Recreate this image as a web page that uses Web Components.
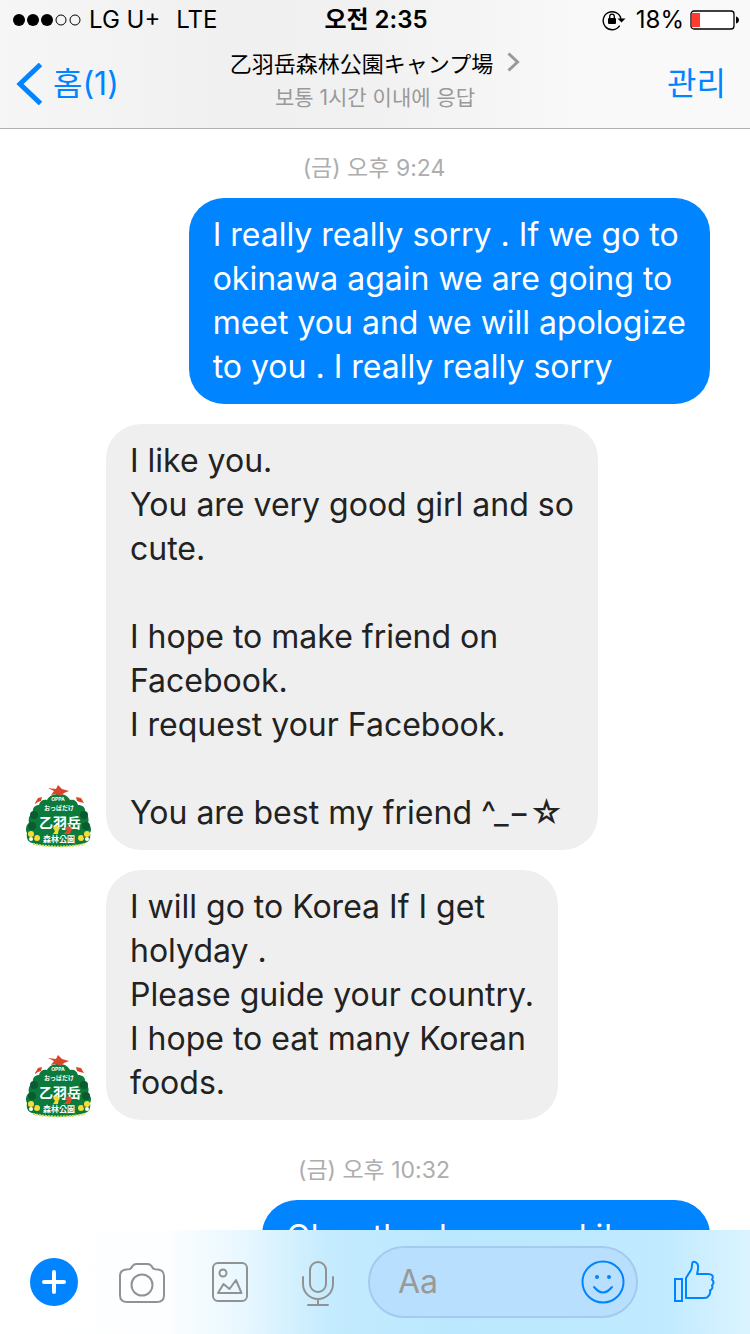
<!DOCTYPE html>
<html lang="ko">
<head>
<meta charset="utf-8">
<meta name="viewport" content="width=device-width, initial-scale=1">
<title>Messenger</title>
<style>
  body {
    margin: 0;
    background: #fff;
    font-family: Inter, "Noto Sans CJK KR", sans-serif;
  }
</style>
</head>
<body>
<chat-app>
  <status-bar slot="top" carrier="LG U+" network="LTE" time="오전 2:35" battery="18"></status-bar>
  <chat-header slot="top" back="홈(1)" action="관리">
    <span slot="title" lang="ja">乙羽岳森林公園キャンプ場</span>
    <span slot="subtitle">보통 1시간 이내에 응답</span>
  </chat-header>

  <time-stamp>(금) 오후 9:24</time-stamp>
  <chat-message mine>I really really sorry . If we go to<br>okinawa again we are going to<br>meet you and we will apologize<br>to you . I really really sorry</chat-message>
  <chat-message>I like you.<br>You are very good girl and so<br>cute.<br><br>I hope to make friend on<br>Facebook.<br>I request your Facebook.<br><br>You are best my friend ^_−☆</chat-message>
  <chat-message>I will go to Korea If I get<br>holyday .<br>Please guide your country.<br>I hope to eat many Korean<br>foods.</chat-message>
  <time-stamp>(금) 오후 10:32</time-stamp>
  <chat-message mine>Okay thank you and i'm so</chat-message>

  <message-composer slot="bottom"></message-composer>
</chat-app>

<script>
class ChatApp extends HTMLElement {
  constructor() {
    super();
    this.attachShadow({ mode: 'open' });
    this.shadowRoot.innerHTML = `
      <style>
        :host {
          display: flex;
          flex-direction: column;
          height: 100vh;
          overflow: hidden;
        }
        header {
          background: linear-gradient(90deg, #f5f6f5 0%, #f0f0f0 30%, #f1f1f1 50%, #f9f9f9 78%);
          border-bottom: 1px solid #b2b2b2;
        }
        main {
          flex: 1;
          min-height: 0;
          overflow: hidden;
          display: flex;
          flex-direction: column;
          gap: 20px;
          padding: 9px 40px 0 26px;
        }
      </style>
      <header><slot name="top"></slot></header>
      <main><slot></slot></main>
      <slot name="bottom"></slot>
    `;
  }
}

class StatusBar extends HTMLElement {
  constructor() {
    super();
    this.attachShadow({ mode: 'open' });
  }

  connectedCallback() {
    const level = Number(this.getAttribute('battery'));
    this.shadowRoot.innerHTML = `
      <style>
        :host {
          display: grid;
          grid-template-columns: 1fr auto 1fr;
          align-items: center;
          height: 40px;
          padding: 0 10px 0 12px;
          font-size: 24px;
          line-height: 40px;
          color: #000;
        }
        svg { display: block; }
        .left, .right {
          display: flex;
          align-items: center;
        }
        .left { gap: 8px; }
        .network { margin-left: 8px; }
        .time { font-weight: 600; }
        .right { justify-content: flex-end; gap: 6px; }
        .lock { margin-right: 4px; }
      </style>
      <div class="left">
        <svg width="69" height="14" viewBox="0 0 69 14">
          <circle cx="7" cy="7" r="6"/><circle cx="21" cy="7" r="6"/><circle cx="35" cy="7" r="6"/>
          <g fill="none" stroke="#000"><circle cx="49" cy="7" r="5"/><circle cx="63" cy="7" r="5"/></g>
        </svg>
        <span>${this.getAttribute('carrier')}</span>
        <span class="network">${this.getAttribute('network')}</span>
      </div>
      <span class="time">${this.getAttribute('time')}</span>
      <div class="right">
        <svg class="lock" width="24" height="22" viewBox="0 0 24 22">
          <path d="M17.7 16.7A9 9 0 1 1 19 10" fill="none" stroke="#000" stroke-width="1.4"/>
          <path d="M15.5 9.5h8l-4 4z"/>
          <rect x="6" y="9" width="8" height="6" rx="1"/>
          <path d="M7.700 9V7.500a2.300 2.300 0 0 1 4.600 0V9" fill="none" stroke="#000" stroke-width="1.300"/>
        </svg>
        <span>${level}%</span>
        <svg width="50" height="20" viewBox="0 0 50 20">
          <rect x="1" y="1" width="43" height="18" rx="3" fill="#fff" stroke="#000" stroke-width="1.3"/>
          <rect x="2" y="3" width="${Math.round(41 * level / 100) + 1}" height="14" fill="#ff3b30"/>
          <path d="M46 6.500c4 1 4 6 0 7z"/>
        </svg>
      </div>
    `;
  }
}

class ChatHeader extends HTMLElement {
  constructor() {
    super();
    this.attachShadow({ mode: 'open' });
  }

  connectedCallback() {
    this.shadowRoot.innerHTML = `
      <style>
        :host {
          display: grid;
          grid-template-columns: 1fr auto 1fr;
          align-items: center;
          height: 88px;
          padding: 0 24px 0 16px;
        }
        a, button {
          font: 400 32px/40px Inter, "Noto Sans CJK KR", sans-serif;
          color: #0084ff;
          text-decoration: none;
        }
        button {
          justify-self: end;
          padding: 0;
          border: 0;
          background: none;
        }
        .back {
          display: flex;
          align-items: center;
          gap: 10px;
        }
        svg { display: block; }
        .center {
          padding: 0 0 8px 8px;
          text-align: center;
        }
        .title {
          display: flex;
          align-items: center;
          gap: 14px;
          margin: 0;
          font: 400 22px/36px "Noto Sans CJK JP", sans-serif;
          color: #000;
        }
        p {
          margin: 0;
          font: 400 21px/36px Inter, "Noto Sans CJK KR", sans-serif;
          color: #999;
        }
      </style>
      <a class="back" href="#">
        <svg width="27" height="42" viewBox="0 0 27 42">
          <path d="M24.500 1.500 4 21l20.500 19.500" fill="none" stroke="#0084ff" stroke-width="5"/>
        </svg>
        <span>${this.getAttribute('back')}</span>
      </a>
      <div class="center">
        <h1 class="title">
          <slot name="title"></slot>
          <svg width="13" height="20" viewBox="0 0 13 20">
            <path d="m1.500 1.500 9 8.500-9 8.500" fill="none" stroke="#999" stroke-width="3"/>
          </svg>
        </h1>
        <p><slot name="subtitle"></slot></p>
      </div>
      <button type="button">${this.getAttribute('action')}</button>
    `;
  }
}

class TimeStamp extends HTMLElement {
  constructor() {
    super();
    this.attachShadow({ mode: 'open' });
    this.shadowRoot.innerHTML = `
      <style>
        :host {
          display: block;
          flex: none;
          margin: 20px 0 0 12px;
          text-align: center;
          font-size: 23px;
          line-height: 20px;
          color: #adadad;
        }
      </style>
      <slot></slot>
    `;
  }
}

class CampAvatar extends HTMLElement {
  constructor() {
    super();
    this.attachShadow({ mode: 'open' });
    this.shadowRoot.innerHTML = `
      <style>
        :host { display: block; width: 66px; height: 66px; }
        svg { display: block; }
        text {
          font-family: "Noto Sans CJK JP", sans-serif;
          font-weight: 700;
          fill: #fff;
          text-anchor: middle;
        }
        .latin { font-family: Inter, sans-serif; }
      </style>
      <svg width="66" height="66" viewBox="0 0 66 66">
        <path fill="#0b7a3b" d="M33 10c5 0 9 2 11 6 4-1 7 1 8 5 5 0 8 3 7 8 4 3 4 7 3 10 3 3 4 7 2 10 1 5-1 9-5 10-16 5-37 5-53 0-4-1-6-5-5-10-2-3-1-8 2-10-1-4 0-8 4-10-1-5 2-8 6-8 1-4 4-6 8-5 2-4 6-6 12-6z"/>
        <g fill="#0a5c30">
          <circle cx="8" cy="31" r="4"/><circle cx="58" cy="31" r="4"/>
          <circle cx="6" cy="42" r="4"/><circle cx="60" cy="42" r="4"/>
        </g>
        <path fill="#d8452b" d="m22 4 8 1 2-4 4 4 7 2-5 2-3 3-5-2-5 1 3-4z"/>
        <path fill="#d8452b" d="m9 19 3-5 4-1-1 4-3 1-3 2zM50 13l5 1 3 5-4-1-3-1z"/>
        <text class="latin" x="32" y="17" font-size="5">OPPA</text>
        <text x="33" y="26" font-size="6">おっぱだけ</text>
        <text x="34" y="44" font-size="14">乙羽岳</text>
        <path fill="#f5dc2c" d="M27 44q4-5 6 0l-1 6h-5l2-3z"/>
        <path fill="#df4b2a" d="M39 44q4-4 7 1l-2 5h-7l4-3z"/>
        <g fill="#f4df38">
          <circle cx="5" cy="50" r="3"/><circle cx="11" cy="54" r="3"/>
          <circle cx="55" cy="54" r="3"/><circle cx="61" cy="50" r="3"/>
        </g>
        <g fill="#fff">
          <circle cx="5" cy="55" r="2"/><circle cx="61" cy="55" r="2"/>
        </g>
        <g fill="#d8452b">
          <circle cx="8" cy="53" r="1"/><circle cx="58" cy="53" r="1"/>
        </g>
        <text x="33" y="58" font-size="8">森林公園</text>
        <path d="M7 60q26 5 52 0" fill="none" stroke="#d3df6a" stroke-width="2" stroke-dasharray="2 1"/>
      </svg>
    `;
  }
}

class ChatMessage extends HTMLElement {
  constructor() {
    super();
    this.attachShadow({ mode: 'open' });
  }

  connectedCallback() {
    const mine = this.hasAttribute('mine');
    this.shadowRoot.innerHTML = `
      <style>
        :host {
          display: flex;
          flex: none;
          align-items: flex-end;
          gap: 14px;
        }
        :host([mine]) { justify-content: flex-end; }
        .bubble {
          padding: 15px 24px;
          border-radius: 35px;
          background: #efefef;
          color: #222;
          font-size: 32px;
          line-height: 44px;
        }
        :host([mine]) .bubble {
          background: #0084ff;
          color: #fff;
        }
      </style>
      ${mine ? '' : '<camp-avatar></camp-avatar>'}
      <div class="bubble"><slot></slot></div>
    `;
  }
}

class MessageComposer extends HTMLElement {
  constructor() {
    super();
    this.attachShadow({ mode: 'open' });
    this.shadowRoot.innerHTML = `
      <style>
        :host {
          display: flex;
          align-items: center;
          gap: 26px;
          height: 104px;
          padding: 0 26px 0 30px;
          background: linear-gradient(90deg, #fff 0%, #fdfeff 22%, #e9f8ff 32%, #c4ebfe 44%, #bbe8fe 60%, #bfeaff 88%, #dcf4ff 100%);
        }
        button {
          padding: 0;
          border: 0;
          background: none;
        }
        svg {
          display: block;
          fill: none;
          stroke: #929292;
          stroke-width: 2;
        }
        .tools {
          display: flex;
          gap: 40px;
        }
        .blue { stroke: #0084ff; }
        .field {
          flex: 1;
          min-width: 0;
          display: flex;
          align-items: center;
          height: 72px;
          box-sizing: border-box;
          padding: 0 10px 0 28px;
          border: 2px solid #a5c9ef;
          border-radius: 36px;
          background: #b8e0fe;
        }
        input {
          flex: 1;
          min-width: 0;
          padding: 0;
          border: 0;
          outline: 0;
          background: none;
          font: 32px/44px Inter, sans-serif;
          color: #222;
        }
        input::placeholder { color: #999; opacity: 1; }
        .like { width: 60px; }
        .like svg { margin: 0 auto; }
      </style>
      <div class="tools">
        <button type="button" aria-label="More">
          <svg width="48" height="48" viewBox="0 0 48 48">
            <circle cx="24" cy="24" r="24" fill="#0084ff" stroke="none"/>
            <path d="M24 14v20M14 24h20" stroke="#fff" stroke-width="4" stroke-linecap="round"/>
          </svg>
        </button>
        <button type="button" aria-label="Camera">
          <svg width="48" height="48" viewBox="0 0 48 48">
            <path d="M8 11.500c4 0 5-.5 6.500-3.500 1-1.500 2-2 4-2h11c2 0 3 .5 4 2 1.500 3 2.500 3.500 6.500 3.500 4 .5 6 3 6 6.500v19c0 5-3 7-7 7H9c-4 0-7-2-7-7V18c0-3.500 2-6 6-6.500z"/>
            <circle cx="24" cy="27" r="10.500"/>
          </svg>
        </button>
        <button type="button" aria-label="Photos">
          <svg width="48" height="48" viewBox="0 0 48 48">
            <rect x="7" y="5" width="34" height="38" rx="5"/>
            <circle cx="17" cy="15" r="3.500"/>
            <path d="m12 35 5.500-9 6 5L30 22l5.500 13z" stroke-linejoin="round"/>
          </svg>
        </button>
        <button type="button" aria-label="Voice">
          <svg width="48" height="48" viewBox="0 0 48 48" stroke-linecap="round">
            <rect x="16" y="4" width="16" height="30" rx="8"/>
            <path d="M9 19v7a15 15 0 0 0 30 0v-7M24 41v6M14 47h20"/>
          </svg>
        </button>
      </div>
      <div class="field">
        <input type="text" placeholder="Aa" aria-label="Message">
        <button type="button" aria-label="Emoji">
          <svg class="blue" width="46" height="46" viewBox="0 0 46 46">
            <circle cx="23" cy="23" r="20.500"/>
            <g fill="#0084ff" stroke="none"><circle cx="17" cy="18" r="2"/><circle cx="29" cy="18" r="2"/></g>
            <path d="M14 28q9 11 18 0" stroke-linecap="round"/>
          </svg>
        </button>
      </div>
      <button class="like" type="button" aria-label="Like">
        <svg class="blue" width="48" height="48" viewBox="0 0 48 48">
          <path d="M5 21h7v22H5z"/>
          <path d="M16 40V20l5-8c1.500-3 .5-5 1.500-7.500 1-1.500 4-.5 5 1.500 1.500 3 .5 6-.5 10h11c4 0 6 2 4 5.500 2 2 2 4 0 6 1 2 0 4-2 5 1 3-1 5-2 6-.5 1.500-2 1.500-4 1.500z" stroke-linejoin="round"/>
        </svg>
      </button>
    `;
  }
}

customElements.define('camp-avatar', CampAvatar);
customElements.define('chat-message', ChatMessage);
customElements.define('time-stamp', TimeStamp);
customElements.define('status-bar', StatusBar);
customElements.define('chat-header', ChatHeader);
customElements.define('message-composer', MessageComposer);
customElements.define('chat-app', ChatApp);
</script>
</body>
</html>
